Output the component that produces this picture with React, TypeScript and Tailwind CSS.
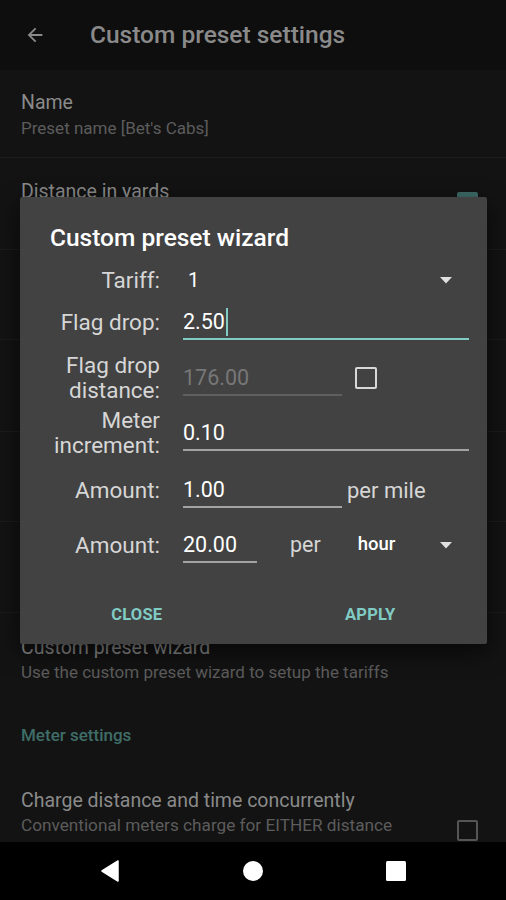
import React from "react";

const font = { fontFamily: "Roboto, 'Noto Sans', sans-serif" };

const Field: React.FC<{
  value: string;
  width: string;
  disabled?: boolean;
  focused?: boolean;
}> = ({ value, width, disabled, focused }) => (
  <div className={`flex flex-col pt-[6px] ${width}`}>
    <div
      className={`flex items-center h-[24px] leading-[24px] text-[21.5px] ${
        disabled ? "text-[#777777]" : "text-white"
      }`}
    >
      <span>{value}</span>
      {focused && <span className="ml-[1px] w-[2px] h-[28px] bg-[#80cbc4]" />}
    </div>
    <div
      className={`mt-[4px] ${
        focused
          ? "h-[2px] bg-[#80cbc4]"
          : disabled
          ? "h-[2px] bg-[#5f5f5f]"
          : "h-[2px] bg-[#a3a3a3]"
      }`}
    />
  </div>
);

const Caret: React.FC = () => (
  <svg width="12" height="7" viewBox="0 0 12 7" className="shrink-0">
    <path d="M0 0 L12 0 L6 6.5 Z" fill="#e0e0e0" />
  </svg>
);

const Row: React.FC<{ label: React.ReactNode; height: string; children: React.ReactNode }> = ({
  label,
  height,
  children,
}) => (
  <div className={`flex items-center ${height}`}>
    <div className="w-[140px] text-right text-[22.5px] leading-[25px] text-[#d6d6d6]">{label}</div>
    <div className="ml-[23px] flex items-center flex-1 pr-[18px]">{children}</div>
  </div>
);

const WizardDialog: React.FC = () => (
  <div className="absolute left-[20px] top-[197px] w-[467px] h-[447px] bg-[#424242] rounded-[2px] shadow-[0_8px_24px_rgba(0,0,0,0.6)] flex flex-col">
    <div className="pt-[26px] pl-[30px] text-[24.5px] leading-[29px] font-medium text-white">
      Custom preset wizard
    </div>
    <div className="mt-[6px] flex flex-col">
      <Row label="Tariff:" height="h-[44px]">
        <div className="flex items-center w-full">
          <span className="ml-[5px] text-[20px] text-white flex-1">1</span>
          <span className="mr-[17px]">
            <Caret />
          </span>
        </div>
      </Row>
      <Row label="Flag drop:" height="h-[40px]">
        <Field value="2.50" width="w-full" focused />
      </Row>
      <Row
        label={
          <>
            Flag drop
            <br />
            distance:
          </>
        }
        height="h-[72px]"
      >
        <Field value="176.00" width="w-[159px]" disabled />
        <div className="ml-[13px] w-[22px] h-[22px] rounded-[2px] border-[2.5px] border-[#d8d8d8]" />
      </Row>
      <Row
        label={
          <>
            Meter
            <br />
            increment:
          </>
        }
        height="h-[38px]"
      >
        <Field value="0.10" width="w-full" />
      </Row>
      <Row label="Amount:" height="h-[76px]">
        <Field value="1.00" width="w-[159px]" />
        <span className="ml-[5px] text-[22px] text-[#d6d6d6]">per mile</span>
      </Row>
      <Row label="Amount:" height="h-[34px]">
        <Field value="20.00" width="w-[74px]" />
        <span className="ml-[33px] text-[21.5px] text-[#d6d6d6]">per</span>
        <span className="ml-[37px] text-[18.5px] font-medium text-white flex-1">hour</span>
        <span className="mr-[17px]">
          <Caret />
        </span>
      </Row>
    </div>
    <div className="mt-[33px] flex h-[40px]">
      <button className="flex-1 text-[16.5px] font-bold text-[#80cbc4] tracking-[0.2px]">CLOSE</button>
      <button className="flex-1 text-[16.5px] font-bold text-[#80cbc4] tracking-[0.2px]">APPLY</button>
    </div>
  </div>
);

const App: React.FC = () => {
  return (
    <div className="relative w-[506px] h-[900px] overflow-hidden bg-[#131313] flex flex-col" style={font}>
      {/* app bar */}
      <div className="h-[70px] shrink-0 bg-[#0e0e0e] flex items-center">
        <svg width="22" height="22" viewBox="0 0 24 24" className="ml-[24px]">
          <path
            d="M20 11H7.83l5.59-5.59L12 4l-8 8 8 8 1.41-1.41L7.83 13H20v-2z"
            fill="#8a8a8a"
          />
        </svg>
        <span className="ml-[44px] text-[24.5px] font-medium text-[#8a8a8a]">Custom preset settings</span>
      </div>

      {/* preference list (dimmed behind dialog) */}
      <div className="flex-1 overflow-hidden">
        <div className="h-[88px] border-b border-[#1c1c1c] pt-[21px] px-[21px]">
          <div className="text-[19.5px] leading-[24px] text-[#8a8a8a]">Name</div>
          <div className="mt-[2px] text-[17px] leading-[22px] text-[#5c5c5c]">Preset name [Bet's Cabs]</div>
        </div>
        <div className="h-[92px] border-b border-[#1c1c1c] pt-[22px] pl-[21px] pr-[28px] flex justify-between">
          <div className="text-[19.5px] leading-[24px] text-[#8a8a8a]">Distance in yards</div>
          <div className="mt-[12px] w-[21px] h-[21px] rounded-[2px] bg-[#3d6b66]" />
        </div>
        <div className="h-[90px] border-b border-[#1c1c1c]" />
        <div className="h-[92px] border-b border-[#1c1c1c]" />
        <div className="h-[90px] border-b border-[#1c1c1c]" />
        <div className="h-[91px] border-b border-[#1c1c1c]" />
        <div className="h-[90px] pt-[23px] px-[21px]">
          <div className="text-[19.5px] leading-[24px] text-[#8a8a8a]">Custom preset wizard</div>
          <div className="mt-[1px] text-[17px] leading-[22px] text-[#5c5c5c]">
            Use the custom preset wizard to setup the tariffs
          </div>
        </div>
        <div className="h-[64px] pt-[21px] px-[21px]">
          <div className="text-[17px] leading-[22px] font-medium text-[#3f6d67]">Meter settings</div>
        </div>
        <div className="pt-[22px] pl-[21px] pr-[28px] flex justify-between">
          <div>
            <div className="text-[19.5px] leading-[24px] text-[#8a8a8a] whitespace-nowrap">
              Charge distance and time concurrently
            </div>
            <div className="text-[17.2px] leading-[24px] text-[#5c5c5c] w-[388px]">
              Conventional meters charge for EITHER distance OR waiting time. Check this option to charge for
              both at the same time.
            </div>
          </div>
          <div className="mt-[31px] w-[21px] h-[21px] shrink-0 rounded-[2px] border-[2.5px] border-[#555555]" />
        </div>
      </div>

      {/* nav bar */}
      <div className="h-[58px] shrink-0 bg-black flex items-center justify-center gap-[123px]">
        <svg width="20" height="22" viewBox="0 0 20 22">
          <path d="M18 1 L18 21 L2 11 Z" fill="#ffffff" stroke="#ffffff" strokeWidth="1.5" strokeLinejoin="round" />
        </svg>
        <svg width="20" height="20" viewBox="0 0 20 20">
          <circle cx="10" cy="10" r="10" fill="#ffffff" />
        </svg>
        <svg width="20" height="20" viewBox="0 0 20 20">
          <rect x="0" y="0" width="20" height="20" rx="1.5" fill="#ffffff" />
        </svg>
      </div>

      <WizardDialog />
    </div>
  );
};

export default App;
